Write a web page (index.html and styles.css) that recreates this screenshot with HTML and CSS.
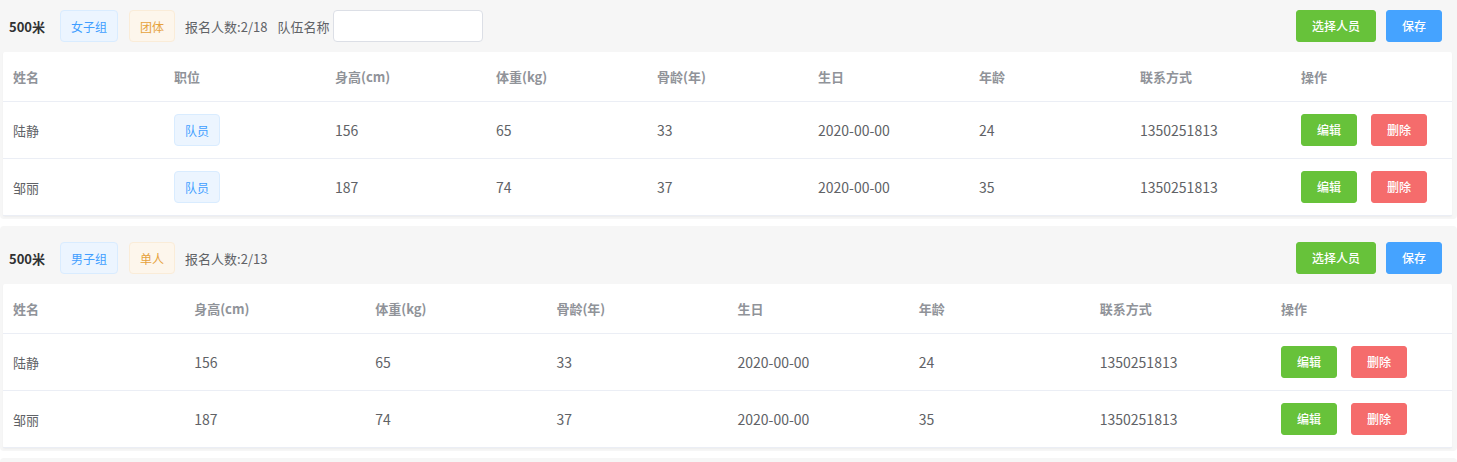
FILE: index.html
```html
<!DOCTYPE html>
<html lang="zh-CN">
<head>
<meta charset="utf-8">
<title>报名</title>
<link rel="stylesheet" href="styles.css">
</head>
<body>
<div class="page">
  <section class="group">
    <div class="group-head">
      <span class="dist">500米</span>
      <span class="tag tag-blue">女子组</span>
      <span class="tag tag-orange">团体</span>
      <span class="count">报名人数:2/18</span>
      <label class="team">队伍名称<input class="team-input" type="text"></label>
      <div class="head-actions">
        <button class="btn btn-green">选择人员</button>
        <button class="btn btn-blue">保存</button>
      </div>
    </div>
    <div class="card">
      <table class="tbl">
        <thead>
          <tr><th>姓名</th><th>职位</th><th>身高(cm)</th><th>体重(kg)</th><th>骨龄(年)</th><th>生日</th><th>年龄</th><th>联系方式</th><th>操作</th></tr>
        </thead>
        <tbody>
          <tr><td class="name">陆静</td><td><span class="tag tag-blue">队员</span></td><td>156</td><td>65</td><td>33</td><td>2020-00-00</td><td>24</td><td>1350251813</td><td><button class="btn btn-green">编辑</button><button class="btn btn-red">删除</button></td></tr>
          <tr><td class="name">邹丽</td><td><span class="tag tag-blue">队员</span></td><td>187</td><td>74</td><td>37</td><td>2020-00-00</td><td>35</td><td>1350251813</td><td><button class="btn btn-green">编辑</button><button class="btn btn-red">删除</button></td></tr>
        </tbody>
      </table>
    </div>
  </section>

  <section class="group">
    <div class="group-head">
      <span class="dist">500米</span>
      <span class="tag tag-blue">男子组</span>
      <span class="tag tag-orange">单人</span>
      <span class="count">报名人数:2/13</span>
      <div class="head-actions">
        <button class="btn btn-green">选择人员</button>
        <button class="btn btn-blue">保存</button>
      </div>
    </div>
    <div class="card">
      <table class="tbl">
        <thead>
          <tr><th>姓名</th><th>身高(cm)</th><th>体重(kg)</th><th>骨龄(年)</th><th>生日</th><th>年龄</th><th>联系方式</th><th>操作</th></tr>
        </thead>
        <tbody>
          <tr><td class="name">陆静</td><td>156</td><td>65</td><td>33</td><td>2020-00-00</td><td>24</td><td>1350251813</td><td><button class="btn btn-green">编辑</button><button class="btn btn-red">删除</button></td></tr>
          <tr><td class="name">邹丽</td><td>187</td><td>74</td><td>37</td><td>2020-00-00</td><td>35</td><td>1350251813</td><td><button class="btn btn-green">编辑</button><button class="btn btn-red">删除</button></td></tr>
        </tbody>
      </table>
    </div>
  </section>

  <section class="group group-stub"></section>
</div>
</body>
</html>
```

FILE: styles.css
```css
html, body {
  margin: 0;
  padding: 0;
  background: #ffffff;
  overflow: hidden;
  height: 462px;
}

body {
  font-family: "Noto Sans CJK SC", "Noto Sans", "Liberation Sans", sans-serif;
  font-size: 14px;
  color: #606266;
}

.page {
  margin-top: -6px;
}

.group {
  background: #f6f6f6;
  border-radius: 4px;
  padding: 16px 5px 3px 3px;
  margin-bottom: 7px;
}

.group-stub {
  height: 200px;
}

.group-head {
  display: flex;
  align-items: center;
  height: 32px;
  padding: 0 10px 0 6px;
  margin-bottom: 10px;
}

.dist {
  font-size: 13px;
  font-weight: bold;
  color: #303133;
  margin-right: 15px;
}

.tag {
  display: inline-flex;
  align-items: center;
  box-sizing: border-box;
  height: 32px;
  padding: 0 10px;
  font-size: 12px;
  border: 1px solid;
  border-radius: 4px;
  white-space: nowrap;
}

.group-head .tag + .tag {
  margin-left: 11px;
}

.tag-blue {
  background: #ecf5ff;
  border-color: #d9ecff;
  color: #409eff;
}

.tag-orange {
  background: #fdf6ec;
  border-color: #faecd8;
  color: #e6a23c;
}

.count {
  margin-left: 10px;
  font-size: 13px;
  color: #606266;
}

.team {
  margin-left: 10px;
  font-size: 13px;
  color: #606266;
  display: flex;
  align-items: center;
}

.team-input {
  margin-left: 4px;
  width: 150px;
  height: 32px;
  box-sizing: border-box;
  border: 1px solid #dcdfe6;
  border-radius: 4px;
  background: #fff;
  outline: none;
}

.head-actions {
  margin-left: auto;
  display: flex;
  gap: 10px;
}

.btn {
  box-sizing: border-box;
  height: 32px;
  padding: 0 15px;
  border: 1px solid transparent;
  border-radius: 3px;
  font-family: inherit;
  font-size: 12px;
  font-weight: 500;
  color: #fff;
  cursor: pointer;
  line-height: 30px;
}

.btn-green { background: #67c23a; border-color: #67c23a; }
.btn-blue { background: #45a3ff; border-color: #45a3ff; }
.btn-red { background: #f56c6c; border-color: #f56c6c; }

td .btn + .btn {
  margin-left: 14px;
}

.card {
  background: #fff;
  border-radius: 2px;
  box-shadow: 0 1px 2px rgba(0, 0, 0, 0.04);
}

.tbl {
  width: 100%;
  table-layout: fixed;
  border-collapse: collapse;
}

.tbl th,
.tbl td {
  text-align: left;
  padding: 12px 0 12px 10px;
  line-height: 23px;
  border-bottom: 1px solid #ebeef5;
  vertical-align: middle;
  white-space: nowrap;
}

.tbl th {
  padding-top: 13px;
  padding-bottom: 13px;
  font-size: 13px;
  font-weight: bold;
  color: #909399;
}

.tbl td {
  font-size: 14px;
  color: #606266;
}

.tbl td.name {
  font-size: 13px;
}

.tbl td .tag {
  vertical-align: middle;
}
```
